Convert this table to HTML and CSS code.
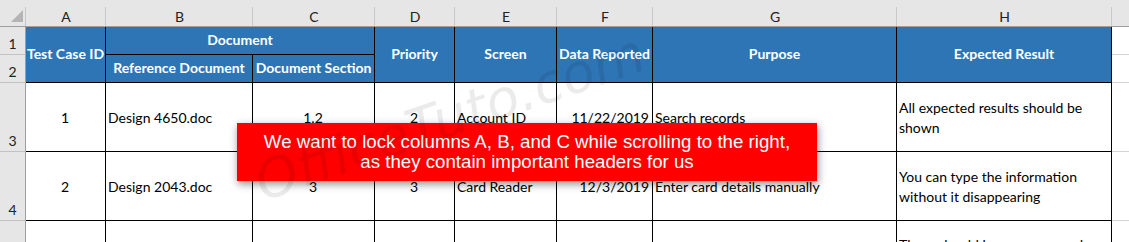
FILE: index.html
```html
<!DOCTYPE html>
<html lang="en">
<head>
<meta charset="utf-8">
<title>Freeze panes</title>
<link rel="stylesheet" href="styles.css">
</head>
<body>
<div class="sheet">
  <div class="corner"><span class="tri"></span></div>
  <div class="colhd">A</div>
  <div class="colhd">B</div>
  <div class="colhd">C</div>
  <div class="colhd">D</div>
  <div class="colhd">E</div>
  <div class="colhd">F</div>
  <div class="colhd">G</div>
  <div class="colhd">H</div>
  <div class="colhd last"></div>

  <div class="rowhd r1">1</div>
  <div class="hd a span2">Test Case ID</div>
  <div class="hd doc">Document</div>
  <div class="hd d span2">Priority</div>
  <div class="hd e span2">Screen</div>
  <div class="hd f span2">Data Reported</div>
  <div class="hd g span2">Purpose</div>
  <div class="hd h span2">Expected Result</div>
  <div class="blank r1c"></div>

  <div class="rowhd r2">2</div>
  <div class="hd b2">Reference Document</div>
  <div class="hd c2">Document Section</div>
  <div class="blank r2c"></div>

  <div class="rowhd">3</div>
  <div class="cell center">1</div>
  <div class="cell">Design 4650.doc</div>
  <div class="cell center">1.2</div>
  <div class="cell center">2</div>
  <div class="cell">Account ID</div>
  <div class="cell right">11/22/2019</div>
  <div class="cell">Search records</div>
  <div class="cell wrap">All expected results should be shown</div>
  <div class="blank"></div>

  <div class="rowhd">4</div>
  <div class="cell center">2</div>
  <div class="cell">Design 2043.doc</div>
  <div class="cell center">3</div>
  <div class="cell center">3</div>
  <div class="cell">Card Reader</div>
  <div class="cell right">12/3/2019</div>
  <div class="cell">Enter card details manually</div>
  <div class="cell wrap">You can type the information without it disappearing</div>
  <div class="blank"></div>

  <div class="rowhd"></div>
  <div class="cell"></div>
  <div class="cell"></div>
  <div class="cell"></div>
  <div class="cell"></div>
  <div class="cell"></div>
  <div class="cell"></div>
  <div class="cell"></div>
  <div class="cell wrap top">There should be no errors and the screen is easy to read</div>
  <div class="blank"></div>
</div>

<div class="watermark">OfficeTuto.com</div>

<div class="callout">
  <p>We want to lock columns A, B, and C while scrolling to the right,<br>as they contain important headers for us</p>
</div>
</body>
</html>
```

FILE: styles.css
```css
* { box-sizing: border-box; }

html, body {
  margin: 0;
  padding: 0;
  width: 1129px;
  height: 242px;
  overflow: hidden;
  background: #ffffff;
}

body {
  position: relative;
  font-family: Lato, "Open Sans", sans-serif;
  font-size: 14px;
  color: #000;
}

.sheet {
  display: grid;
  grid-template-columns: 26px 80px 147px 122px 80px 102px 96px 244px 215px 1fr;
  grid-template-rows: 27px 28px 28px 69px 69px 60px;
}

.corner {
  background: #e6e6e6;
  border-bottom: 1px solid #9e9e9e;
  position: relative;
  background-image: linear-gradient(#c6c6c6, #c6c6c6);
  background-size: 1px 19px;
  background-position: right bottom;
  background-repeat: no-repeat;
}

.tri {
  position: absolute;
  right: 3px;
  bottom: 4px;
  width: 0;
  height: 0;
  border-left: 12px solid transparent;
  border-bottom: 12px solid #b4b4b4;
}

.colhd {
  background-color: #e6e6e6;
  background-image: linear-gradient(#c9c9c9, #c9c9c9);
  background-size: 1px 19px;
  background-position: right bottom;
  background-repeat: no-repeat;
  border-bottom: 1px solid #9e9e9e;
  display: flex;
  align-items: center;
  justify-content: center;
  padding-top: 7px;
  font-size: 14px;
  color: #222;
}

.colhd.last { background-image: none; }

.rowhd {
  background: #e6e6e6;
  border-right: 1px solid #9e9e9e;
  border-bottom: 1px solid #c2c2c2;
  display: flex;
  align-items: flex-end;
  justify-content: center;
  padding-bottom: 2px;
  font-size: 14px;
  color: #222;
}

.hd {
  background: #2e75b6;
  color: #fff;
  font-weight: 700;
  border-right: 1px solid #000;
  border-bottom: 1px solid #000;
  display: flex;
  align-items: center;
  justify-content: center;
  white-space: nowrap;
  padding-bottom: 3px;
}

.span2 { grid-row: 2 / span 2; }
.a { grid-column: 2; }
.doc { grid-column: 3 / span 2; grid-row: 2; }
.d { grid-column: 5; }
.e { grid-column: 6; }
.f { grid-column: 7; }
.g { grid-column: 8; }
.h { grid-column: 9; }
.r1c { grid-column: 10; grid-row: 2; }
.b2 { grid-column: 3; grid-row: 3; }
.c2 { grid-column: 4; grid-row: 3; }
.r2c { grid-column: 10; grid-row: 3; }

.cell {
  border-right: 1px solid #000;
  border-bottom: 1px solid #000;
  display: flex;
  align-items: center;
  padding: 1px 3px 0 2px;
  white-space: nowrap;
}

.cell.center { justify-content: center; }
.cell.right { justify-content: flex-end; }
.cell.wrap {
  white-space: normal;
  line-height: 20px;
  padding-right: 8px;
}
.cell.top { align-items: flex-start; padding-top: 14px; }

.blank {
  border-bottom: 1px solid #d4d4d4;
}

.watermark {
  position: absolute;
  left: 220px;
  top: 88px;
  width: 460px;
  height: 60px;
  line-height: 60px;
  text-align: center;
  font-family: "DejaVu Sans", sans-serif;
  font-weight: 200;
  font-style: italic;
  font-size: 54px;
  color: rgba(0, 0, 0, 0.08);
  transform: rotate(-19deg);
  z-index: 3;
  pointer-events: none;
}

.callout {
  position: absolute;
  left: 237px;
  top: 123px;
  width: 580px;
  height: 58px;
  background: #ff0000;
  box-shadow: 1px 3px 8px rgba(0, 0, 0, 0.45);
  display: flex;
  align-items: center;
  justify-content: center;
  z-index: 2;
}

.callout p {
  margin: 0;
  color: #fff;
  font-family: "Liberation Sans", Arial, sans-serif;
  font-size: 18.7px;
  line-height: 20px;
  text-align: center;
}
```
